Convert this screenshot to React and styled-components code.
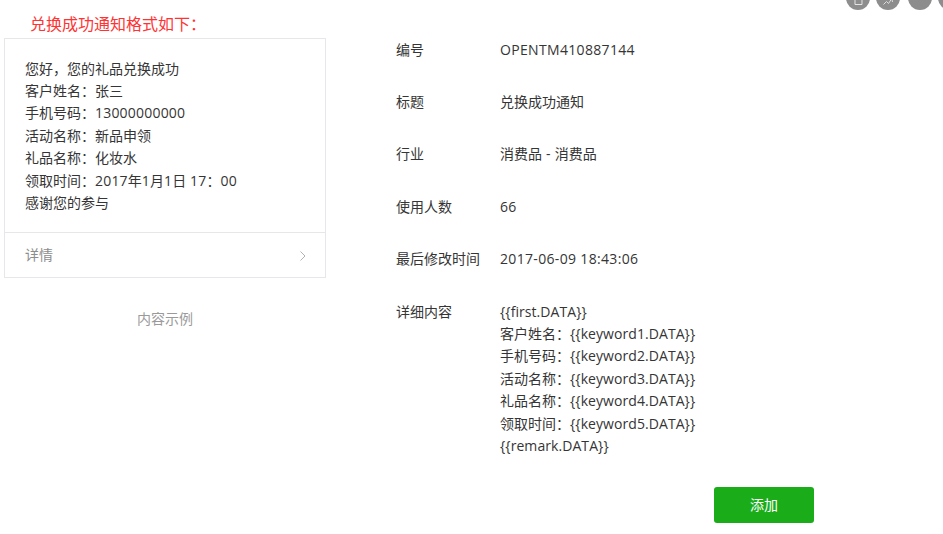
import React from 'react'
import styled, { createGlobalStyle } from 'styled-components'

const GlobalStyle = createGlobalStyle`
  html, body {
    margin: 0;
    padding: 0;
    background: #fff;
    overflow: hidden;
  }
  body {
    font-family: "Open Sans", "Noto Sans CJK SC", sans-serif;
    font-size: 14px;
    line-height: 22.4px;
    color: #353535;
  }
`

const Page = styled.div`
  position: relative;
  width: 943px;
  height: 534px;
  overflow: hidden;
  display: flex;
  align-items: flex-start;
`

const ToolDots = styled.div`
  position: absolute;
  top: -14px;
  left: 846px;
  display: flex;
  gap: 6px;
`

const ToolDot = styled.div`
  width: 24px;
  height: 24px;
  border-radius: 50%;
  background: #8d8d8d;
  margin-right: ${p => p.$extra || 0}px;
  box-sizing: border-box;
  padding-bottom: 5px;
  display: flex;
  align-items: flex-end;
  justify-content: center;
`

const LeftColumn = styled.div`
  width: 322px;
  margin-left: 4px;
  flex: none;
`

const Notice = styled.div`
  height: 38px;
  box-sizing: border-box;
  padding: 13px 0 0 26px;
  font-size: 16px;
  line-height: 22px;
  color: #f33;
`

const Card = styled.div`
  border: 1px solid #e7e7eb;
`

const CardBody = styled.div`
  padding: 18.6px 20px 17.6px;
  border-bottom: 1px solid #e7e7eb;
`

const CardLine = styled.div`
  white-space: nowrap;
`

const CardFooter = styled.div`
  height: 44px;
  padding: 0 19px 0 20px;
  display: flex;
  align-items: center;
  justify-content: space-between;
  color: #8d8d8d;
`

const Chevron = styled.svg`
  margin-top: 1px;
  fill: none;
  stroke: #b2b2b2;
  stroke-width: 1;
`

const Caption = styled.div`
  margin-top: 30px;
  text-align: center;
  color: #9a9a9a;
`

const RightColumn = styled.div`
  margin-left: 70px;
  padding-top: 38.6px;
  width: 418px;
`

const Row = styled.div`
  display: flex;
  margin-bottom: 30px;
`

const Label = styled.div`
  width: 104px;
  flex: none;
  white-space: nowrap;
`

const Value = styled.div`
  white-space: nowrap;
`

const Latin = styled.span`
  letter-spacing: ${p => p.$spacing}px;
`

const Actions = styled.div`
  display: flex;
  justify-content: flex-end;
`

const AddButton = styled.button`
  width: 100px;
  height: 36px;
  border: 0;
  border-radius: 3px;
  background: #1aad19;
  color: #fff;
  font: inherit;
  padding: 0;
`

const cardLines = [
  '您好，您的礼品兑换成功',
  '客户姓名：张三',
  '手机号码：13000000000',
  '活动名称：新品申领',
  '礼品名称：化妆水',
  '领取时间：2017年1月1日 17：00',
  '感谢您的参与',
]

const rows = [
  ['编号', 'OPENTM410887144'],
  ['标题', '兑换成功通知'],
  ['行业', '消费品 - 消费品'],
  ['使用人数', '66'],
  ['最后修改时间', '2017-06-09 18:43:06'],
]

const details = [
  '{{first.DATA}}',
  '客户姓名：{{keyword1.DATA}}',
  '手机号码：{{keyword2.DATA}}',
  '活动名称：{{keyword3.DATA}}',
  '礼品名称：{{keyword4.DATA}}',
  '领取时间：{{keyword5.DATA}}',
  '{{remark.DATA}}',
]

// the latin runs come out a bit narrow next to the cjk, so open them up
const spaced = (text, spacing) =>
  text.split(/([\x20-\x7e]+)/).map((part, i) =>
    i % 2 ? <Latin key={i} $spacing={spacing}>{part}</Latin> : part
  )

export default function App() {
  return (
    <Page>
      <GlobalStyle />
      <ToolDots>
        <ToolDot>
          <svg width="9" height="7" viewBox="0 0 9 7" fill="none" stroke="#e4e4e4" strokeWidth="1">
            <path d="M1 0v6.5h7V0" />
          </svg>
        </ToolDot>
        <ToolDot $extra={2}>
          <svg width="10" height="6" viewBox="0 0 10 6" fill="none" stroke="#dcdcdc" strokeWidth="1">
            <path d="M.5 5.5l3-3 2 2 3-4.5M9 0l.5 3" />
          </svg>
        </ToolDot>
        <ToolDot />
        <ToolDot />
      </ToolDots>
      <LeftColumn>
        <Notice>兑换成功通知格式如下：</Notice>
        <Card>
          <CardBody>
            {cardLines.map(line => <CardLine key={line}>{spaced(line, 0.2)}</CardLine>)}
          </CardBody>
          <CardFooter>
            详情
            <Chevron width="6" height="10" viewBox="0 0 6 10">
              <path d="M.5 .5L5 5 .5 9.5" />
            </Chevron>
          </CardFooter>
        </Card>
        <Caption>内容示例</Caption>
      </LeftColumn>
      <RightColumn>
        {rows.map(([label, value]) => (
          <Row key={label}>
            <Label>{label}</Label>
            <Value>{spaced(value, 0.33)}</Value>
          </Row>
        ))}
        <Row>
          <Label>详细内容</Label>
          <Value>
            {details.map(line => <div key={line}>{spaced(line, 0.07)}</div>)}
          </Value>
        </Row>
        <Actions>
          <AddButton>添加</AddButton>
        </Actions>
      </RightColumn>
    </Page>
  )
}
